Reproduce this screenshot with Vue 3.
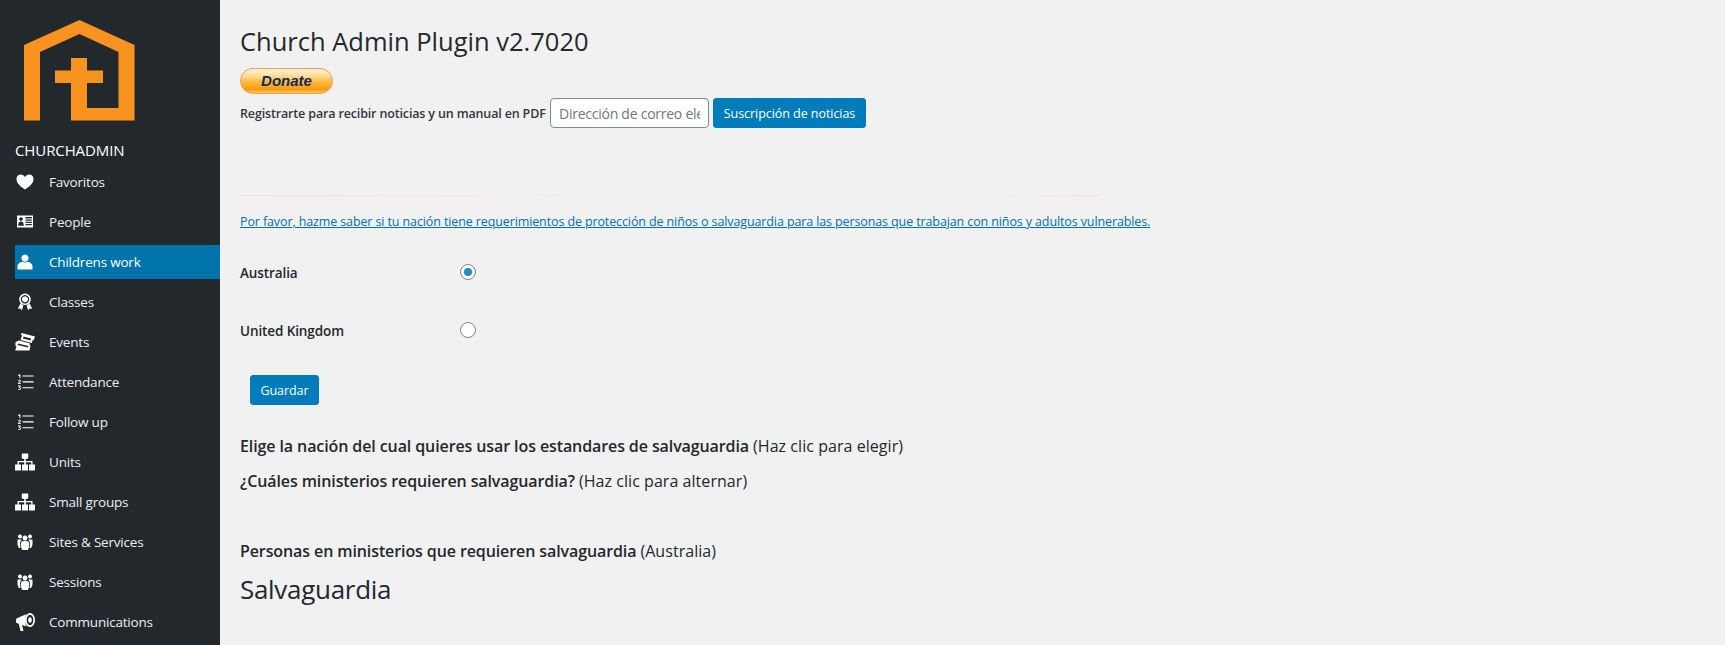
<template>
  <div class="page">
    <aside class="sidebar">
      <svg class="logo" viewBox="0 0 111 101" width="111" height="101">
        <path
          fill="#f7931e"
          d="M55.5 0 110.5 25V100.5H47V63H31V50.5H47V38H63V50.5H79V63H63V88H94.5V32L55.5 14 16 32V100.5H0V25Z"
        />
      </svg>
      <div class="brand">CHURCHADMIN</div>
      <div
        class="menuItem"
        :class="item.active ? 'activeItem' : ''"
        v-for="item in menu"
        :key="item.label"
      >
        <svg class="menuIcon" viewBox="0 0 20 20" width="20" height="20">
          <path fill="#fff" fill-rule="evenodd" :d="icons[item.icon]" />
        </svg>
        <span>{{ item.label }}</span>
      </div>
    </aside>

    <main class="content">
      <h1>Church Admin Plugin v2.7020</h1>
      <div class="donate">Donate</div>
      <div class="newsRow">
        <span class="newsLabel">Registrarte para recibir noticias y un manual en PDF</span>
        <input class="email" type="text" placeholder="Dirección de correo electrónico" />
        <button class="blueBtn newsBtn">Suscripción de noticias</button>
      </div>
      <div class="faint"></div>
      <a class="notice" href="#">Por favor, hazme saber si tu nación tiene requerimientos de protección de niños o salvaguardia para las personas que trabajan con niños y adultos vulnerables.</a>

      <div class="nations">
        <label class="nation" v-for="nation in nations" :key="nation">
          <span>{{ nation }}</span>
          <span class="radio" :class="nation === picked ? 'radioOn' : ''"></span>
        </label>
      </div>
      <button class="blueBtn saveBtn">Guardar</button>

      <h3 class="pick">Elige la nación del cual quieres usar los estandares de salvaguardia <span>(Haz clic para elegir)</span></h3>
      <h3 class="which">¿Cuáles ministerios requieren salvaguardia? <span>(Haz clic para alternar)</span></h3>
      <h3 class="people">Personas en ministerios que requieren salvaguardia <span>(Australia)</span></h3>
      <h2>Salvaguardia</h2>
    </main>
  </div>
</template>

<script setup>
import { ref } from "vue";

const picked = ref("Australia");
const nations = ["Australia", "United Kingdom"];

const icons = {
  heart:
    "M10 17.5C6.5 15 1.5 12 1.5 7 1.5 4.2 3.4 2.5 5.7 2.5 7.7 2.5 9.2 3.6 10 5.2 10.8 3.6 12.3 2.5 14.3 2.5 16.6 2.5 18.5 4.2 18.5 7 18.5 12 13.5 15 10 17.5Z",
  card:
    "M2 3.5H18V15.5H2ZM10.5 5V6.5H16.8V5ZM10.5 7.5V8.7H16.8V7.5ZM10.5 9.7V10.9H16.8V9.7ZM10.5 12V13.2H16.8V12ZM6 5.2A1.8 1.8 0 1 1 5.99 5.2ZM3.2 13.8C3.2 10.8 4.2 9.6 6 9.6S8.8 10.8 8.8 13.8Z",
  person:
    "M10 2.5A3.6 3.6 0 1 1 9.99 2.5ZM2.5 17.5V14.5C2.5 11.5 5.5 10.2 7.6 9.8 8.8 10.6 11.2 10.6 12.4 9.8 14.5 10.2 17.5 11.5 17.5 14.5V17.5Z",
  award:
    "M10 1.5A5.8 5.8 0 1 1 9.99 1.5ZM10 3.1A4.2 4.2 0 1 0 10.01 3.1ZM10 4.3A3 3 0 1 1 9.99 4.3ZM5.4 11.5 8.4 13.6 6.8 18.5 5.4 16.4 2.8 16.8ZM14.6 11.5 11.6 13.6 13.2 18.5 14.6 16.4 17.2 16.8Z",
  tickets:
    "M6.5 1 20 4.5 18.5 8.5 17.5 8.2 16.8 11 5.6 8 7 3.2 5.8 2.8ZM8.6 4.6 8 6.5 15.4 8.5 16 6.6ZM.5 10 4 8.5 15 11.5 14.5 13.2 15.5 13.5 14.5 18.5H.2L1.5 14.5.5 14ZM3 11.5 2.6 13 13 15.4 13.4 13.9Z",
  list:
    "M3 3 4.6 2.2H5.4V6.2H4.4V3.6L3 4.2ZM7.5 3.5H18.5V4.6H7.5ZM7.5 9.3H18.5V10.4H7.5ZM7.5 15.2H18.5V16.3H7.5ZM3 8.4C3.4 7.6 5.8 7.4 5.8 9 5.8 10 4.6 10.6 4.2 11.2H5.9V12.1H3V11.2C3.6 10.2 4.8 9.8 4.8 9.1 4.8 8.5 3.9 8.7 3.3 9.1ZM3 13.6H5.8V14.3L4.8 15.2C5.6 15.3 6 15.8 6 16.4 6 18 3.6 18 3 17.4L3.3 16.7C3.8 17.1 5 17.2 5 16.4 5 15.9 4.3 15.8 3.8 15.8V15.1L4.6 14.4H3Z",
  sitemap:
    "M6.8 1.5H13.2V6.8H10.8V9H17.5V12.5H20V18.5H14V12.5H16.2V10.3H10.8V12.5H13V18.5H7V12.5H9.2V10.3H3.8V12.5H6V18.5H0V12.5H2.5V9H9.2V6.8H6.8Z",
  groups:
    "M10 3.6A2.5 2.5 0 1 1 9.99 3.6ZM5 2.6A2 2 0 1 1 4.99 2.6ZM15 2.6A2 2 0 1 1 14.99 2.6ZM7.2 9.2C8.2 8.9 11.8 8.9 12.8 9.2 14 9.7 14.4 11.5 14.2 14L13 18H7L5.8 14C5.6 11.5 6 9.7 7.2 9.2ZM2.5 7.8C3.5 7.2 6 7.4 6.8 7.8 5.4 8.8 4.8 10.5 5 14L5.6 16H3.8L2.5 12.5ZM17.5 7.8C16.5 7.2 14 7.4 13.2 7.8 14.6 8.8 15.2 10.5 15 14L14.4 16H16.2L17.5 12.5Z",
  horn:
    "M1.5 6.5 11.5 2C9.5 5 9.5 11 11.5 14.5L7 13 8.5 19H5.5L3.8 11.8 1.5 11C.8 10 .8 7.5 1.5 6.5ZM15 1A5 7 0 1 1 14.99 1ZM15 2.7A3.3 5.3 0 1 0 15.01 2.7ZM15 5.2A1.8 2.8 0 1 1 14.99 5.2Z",
};

const menu = [
  { label: "Favoritos", icon: "heart" },
  { label: "People", icon: "card" },
  { label: "Childrens work", icon: "person", active: true },
  { label: "Classes", icon: "award" },
  { label: "Events", icon: "tickets" },
  { label: "Attendance", icon: "list" },
  { label: "Follow up", icon: "list" },
  { label: "Units", icon: "sitemap" },
  { label: "Small groups", icon: "sitemap" },
  { label: "Sites & Services", icon: "groups" },
  { label: "Sessions", icon: "groups" },
  { label: "Communications", icon: "horn" },
];
</script>

<style>
html,
body {
  margin: 0;
  height: 645px;
  overflow: hidden;
  background: #f1f1f1;
}
</style>

<style scoped>
.page {
  display: flex;
  height: 645px;
  overflow: hidden;
  font-family: "Open Sans", "Noto Sans", sans-serif;
  color: #23282d;
}
.sidebar {
  width: 205px;
  padding-left: 15px;
  flex-shrink: 0;
  background-color: #23282d;
  color: #eee;
}
.logo {
  display: block;
  margin: 20px 0 0 9px;
}
.brand {
  margin-top: 19px;
  height: 20px;
  line-height: 20px;
  font-size: 15px;
  font-weight: 500;
  color: #fff;
  letter-spacing: -0.1px;
}
.menuItem {
  display: flex;
  align-items: center;
  height: 34px;
  margin-bottom: 6px;
  font-size: 13.5px;
  letter-spacing: -0.2px;
}
.brand + .menuItem {
  margin-top: 5px;
}
.activeItem {
  background-color: #0073aa;
  color: #fff;
}
.menuIcon {
  width: 20px;
  height: 20px;
  margin-right: 14px;
}
.content {
  flex: 1;
  padding-left: 20px;
}
h1 {
  margin: 0;
  padding-top: 25px;
  height: 33px;
  line-height: 33px;
  font-size: 25.5px;
  font-weight: 500;
}
.donate {
  margin-top: 10px;
  width: 91px;
  height: 24px;
  line-height: 24px;
  text-align: center;
  border: 1px solid #f0a060;
  border-radius: 13px;
  background: linear-gradient(#fff4d8 0%, #ffdc94 30%, #ffb83a 55%, #f79c13 85%, #fdc25c 100%);
  font-family: "Liberation Sans", sans-serif;
  font-size: 15px;
  font-style: italic;
  font-weight: 700;
  color: #13285c;
}
.newsRow {
  display: flex;
  align-items: center;
  margin-top: 4px;
  height: 30px;
}
.newsLabel {
  width: 310px;
  font-size: 12.5px;
  font-weight: 600;
  letter-spacing: -0.15px;
  white-space: nowrap;
  color: #32373c;
}
.email {
  box-sizing: border-box;
  width: 159px;
  height: 30px;
  padding: 0 8px;
  border: 1px solid #7e8993;
  border-radius: 4px;
  background: #fff;
  font-family: inherit;
  font-size: 14px;
  letter-spacing: -0.25px;
}
.email::placeholder {
  color: #72777c;
  opacity: 1;
}
.blueBtn {
  box-sizing: border-box;
  height: 30px;
  padding: 0 11px;
  border: 1px solid #007cba;
  border-radius: 3px;
  background-color: #007cba;
  color: #fff;
  font-family: inherit;
  font-size: 12.5px;
  letter-spacing: -0.05px;
}
.newsBtn {
  width: 153px;
  margin-left: 4px;
  padding: 0;
  white-space: nowrap;
}
.faint {
  height: 1px;
  width: 860px;
  margin-top: 67px;
  background: linear-gradient(90deg, #fadada 0, #f8e4e4 25%, #f1f1f1 40%, #f1f1f1 88%, #fadada 100%);
}
.notice {
  display: block;
  margin-top: 17px;
  line-height: 18px;
  font-size: 12.5px;
  letter-spacing: -0.115px;
  color: #0073aa;
  white-space: nowrap;
}
.nations {
  margin-top: 32px;
}
.nation {
  display: grid;
  grid-template-columns: 220px 16px;
  align-items: center;
  height: 20px;
  margin-bottom: 38px;
  font-size: 13.5px;
  font-weight: 600;
  letter-spacing: -0.1px;
}
.radio {
  box-sizing: border-box;
  position: relative;
  width: 16px;
  height: 16px;
  margin-top: -2px;
  border: 1px solid #7e8993;
  border-radius: 50%;
  background: #fff;
}
.radioOn::before {
  content: "";
  position: absolute;
  left: 3px;
  top: 3px;
  width: 8px;
  height: 8px;
  border-radius: 50%;
  background: #1e8cbe;
}
.saveBtn {
  display: block;
  width: 69px;
  margin-left: 10px;
  margin-top: -4px;
  padding: 0;
}
h3 {
  margin: 0;
  height: 20px;
  line-height: 20px;
  font-size: 16px;
  font-weight: 600;
  letter-spacing: -0.1px;
  white-space: nowrap;
}
h3 span {
  font-weight: 500;
  letter-spacing: 0.05px;
}
.pick {
  margin-top: 31px;
}
.which {
  margin-top: 15px;
}
.people {
  margin-top: 50px;
}
h2 {
  margin: 10px 0 0;
  height: 36px;
  line-height: 36px;
  font-size: 26px;
  font-weight: 500;
  letter-spacing: -0.3px;
}
</style>
